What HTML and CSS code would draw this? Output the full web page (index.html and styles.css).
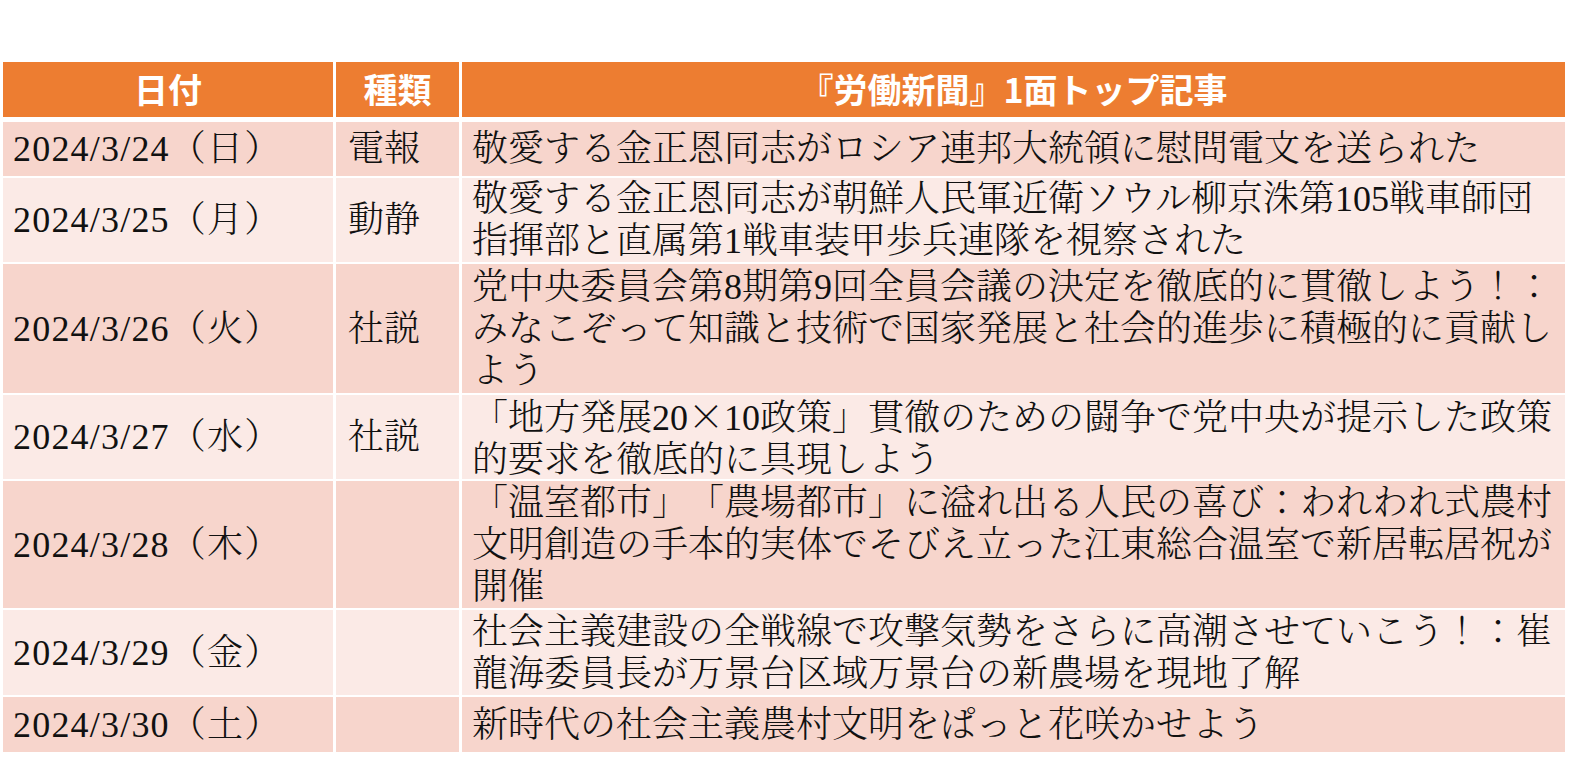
FILE: index.html
```html
<!DOCTYPE html>
<html lang="ja">
<head>
<meta charset="utf-8">
<title>『労働新聞』1面トップ記事</title>
<link rel="stylesheet" href="styles.css">
</head>
<body>
<div class="sheet">
  <div class="table">
    <div class="head">
      <div class="hcell">日付</div>
      <div class="hcell">種類</div>
      <div class="hcell">『労働新聞』1面トップ記事</div>
    </div>
    <div class="body">
      <div class="cell odd date">2024/3/24（日）</div>
      <div class="cell odd kind">電報</div>
      <div class="cell odd title"><p class="lines">敬愛する金正恩同志がロシア連邦大統領に慰問電文を送られた</p></div>

      <div class="cell even date">2024/3/25（月）</div>
      <div class="cell even kind">動静</div>
      <div class="cell even title"><p class="lines">敬愛する金正恩同志が朝鮮人民軍近衛ソウル柳京洙第105戦車師団<br>指揮部と直属第1戦車装甲歩兵連隊を視察された</p></div>

      <div class="cell odd date">2024/3/26（火）</div>
      <div class="cell odd kind">社説</div>
      <div class="cell odd title"><p class="lines">党中央委員会第8期第9回全員会議の決定を徹底的に貫徹しよう！：<br>みなこぞって知識と技術で国家発展と社会的進歩に積極的に貢献し<br>よう</p></div>

      <div class="cell even date">2024/3/27（水）</div>
      <div class="cell even kind">社説</div>
      <div class="cell even title"><p class="lines">「地方発展20<span class="cjk">×</span>10政策」貫徹のための闘争で党中央が提示した政策<br>的要求を徹底的に具現しよう</p></div>

      <div class="cell odd date">2024/3/28（木）</div>
      <div class="cell odd kind"></div>
      <div class="cell odd title"><p class="lines">「温室都市」「農場都市」に溢れ出る人民の喜び：われわれ式農村<br>文明創造の手本的実体でそびえ立った江東総合温室で新居転居祝が<br>開催</p></div>

      <div class="cell even date">2024/3/29（金）</div>
      <div class="cell even kind"></div>
      <div class="cell even title"><p class="lines">社会主義建設の全戦線で攻撃気勢をさらに高潮させていこう！：崔<br>龍海委員長が万景台区域万景台の新農場を現地了解</p></div>

      <div class="cell odd date">2024/3/30（土）</div>
      <div class="cell odd kind"></div>
      <div class="cell odd title"><p class="lines">新時代の社会主義農村文明をぱっと花咲かせよう</p></div>
    </div>
  </div>
</div>
</body>
</html>
```

FILE: styles.css
```css
html, body {
  margin: 0;
  padding: 0;
  background: #ffffff;
}

.sheet {
  width: 1573px;
  height: 761px;
  padding: 62px 0 0 3px;
  box-sizing: border-box;
  overflow: hidden;
}

.table {
  display: flex;
  flex-direction: column;
  gap: 5px;
  width: 1562px;
}

.head,
.body {
  display: grid;
  grid-template-columns: 330px 123px 1103px;
  column-gap: 3px;
}

.head {
  grid-template-rows: 55px;
}

.body {
  row-gap: 2px;
  grid-template-rows: 54px 84px 129px 84px 127px 85px 55px;
}

.hcell {
  background: #ed7d31;
  color: #ffffff;
  font-family: "Noto Sans CJK JP", "Noto Sans", sans-serif;
  font-weight: 700;
  font-size: 34px;
  line-height: 40px;
  display: flex;
  align-items: center;
  justify-content: center;
  padding-bottom: 2px;
  box-sizing: border-box;
  text-spacing-trim: space-all;
}

.cell {
  display: flex;
  align-items: center;
  font-family: "Liberation Serif", "Noto Serif CJK JP", "Noto Sans CJK JP", serif;
  font-weight: 300;
  font-size: 36px;
  line-height: 42px;
  color: #111111;
  white-space: nowrap;
  box-sizing: border-box;
  text-spacing-trim: space-all;
}

.lines {
  margin: 0;
}

.cjk {
  font-family: "Noto Sans CJK JP", sans-serif;
}

.odd {
  background: #f7d5cc;
}

.even {
  background: #fbeae6;
}

.date {
  padding-left: 10px;
  letter-spacing: 1.2px;
}

.kind {
  padding-left: 12px;
}

.title {
  padding-left: 10px;
  padding-right: 4px;
}
```
